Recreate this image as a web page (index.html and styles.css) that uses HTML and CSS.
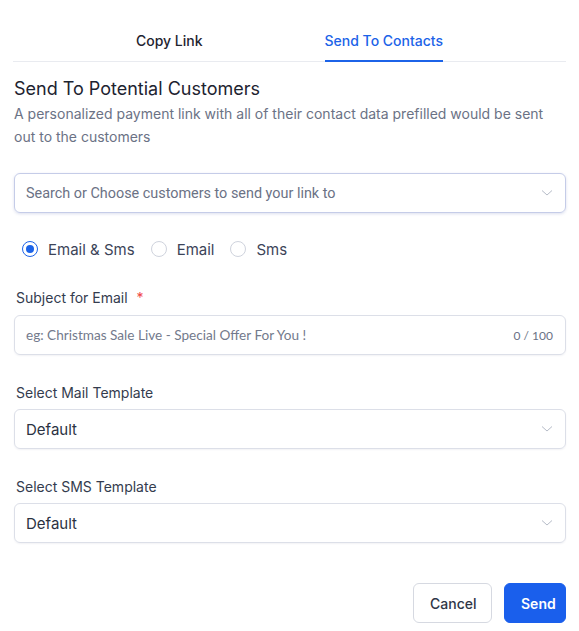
FILE: index.html
```html
<!DOCTYPE html>
<html>
<head>
<meta charset="utf-8">
<link rel="stylesheet" href="styles.css">
</head>
<body>
<div class="panel">
  <div class="tabs">
    <div class="tab">Copy Link</div>
    <div class="tab active">Send To Contacts</div>
  </div>
  <h2 class="title">Send To Potential Customers</h2>
  <p class="desc">A personalized payment link with all of their contact data prefilled would be sent out to the customers</p>

  <div class="field search">
    <span class="placeholder">Search or Choose customers to send your link to</span>
    <svg class="chev" width="12" height="8" viewBox="0 0 12 8"><path d="M1 1.5 L6 6 L11 1.5" fill="none" stroke="#b6bcc8" stroke-width="1"/></svg>
  </div>

  <div class="radios">
    <label class="radio"><span class="dot checked"></span>Email &amp; Sms</label>
    <label class="radio"><span class="dot"></span>Email</label>
    <label class="radio"><span class="dot"></span>Sms</label>
  </div>

  <div class="label first">Subject for Email <span class="req">*</span></div>
  <div class="field input">
    <span class="placeholder ph-input">eg: Christmas Sale Live - Special Offer For You !</span>
    <span class="count">0 / 100</span>
  </div>

  <div class="label second">Select Mail Template</div>
  <div class="field select">
    <span class="value">Default</span>
    <svg class="chev" width="12" height="8" viewBox="0 0 12 8"><path d="M1 1.5 L6 6 L11 1.5" fill="none" stroke="#b6bcc8" stroke-width="1"/></svg>
  </div>

  <div class="label third">Select SMS Template</div>
  <div class="field select">
    <span class="value">Default</span>
    <svg class="chev" width="12" height="8" viewBox="0 0 12 8"><path d="M1 1.5 L6 6 L11 1.5" fill="none" stroke="#b6bcc8" stroke-width="1"/></svg>
  </div>

  <div class="actions">
    <button class="btn cancel">Cancel</button>
    <button class="btn send">Send</button>
  </div>
</div>
</body>
</html>
```
FILE: styles.css
```css
* { box-sizing: border-box; }
body {
  margin: 0;
  background: #fff;
  font-family: Inter, "Noto Sans", sans-serif;
  color: #1f2937;
}
.panel {
  padding: 0 13px 0 14px;
}
.tabs {
  display: flex;
  justify-content: center;
  gap: 122px;
  border-bottom: 1px solid #e9ebf0;
  height: 62px;
  padding-top: 31px;
  margin-left: -1px;
}
.tab {
  font-size: 14px;
  font-weight: 500;
  color: #1f2430;
  height: 31px;
  line-height: 20px;
}
.tab.active {
  color: #1c63e8;
  border-bottom: 2px solid #1c63e8;
}
.title {
  margin: 15px 0 0;
  font-size: 18px;
  font-weight: 400;
  color: #1d2330;
  line-height: 24px;
}
.desc {
  margin: 1px 0 0;
  font-size: 14px;
  line-height: 23px;
  color: #6b7285;
}
.field {
  height: 40px;
  border: 1px solid #dcdfe8;
  border-radius: 6px;
  display: flex;
  align-items: center;
  padding: 0 12px 0 11px;
  box-shadow: 0 1px 2px rgba(30, 40, 80, 0.06);
}
.search {
  margin-top: 25px;
  border-color: #c5cce8;
  box-shadow: 0 1px 3px rgba(60, 80, 160, 0.18);
}
.placeholder {
  font-family: Roboto, "Noto Sans", sans-serif;
  font-size: 14.4px;
  color: #6b7285;
  flex: 1;
}
.ph-input {
  font-family: Lato, "Noto Sans", sans-serif;
  font-size: 13.6px;
  color: #737a8c;
}
.chev { margin-left: auto; }
.radios {
  display: flex;
  align-items: center;
  margin-top: 26px;
  padding-left: 8px;
  height: 20px;
}
.radio {
  display: flex;
  align-items: center;
  font-size: 15px;
  color: #3c4458;
  margin-right: 16px;
}
.dot {
  width: 16px;
  height: 16px;
  border: 1px solid #cfd3dd;
  border-radius: 50%;
  margin-right: 10px;
  position: relative;
}
.dot.checked {
  border: 1.5px solid #1c63e8;
}
.dot.checked::after {
  content: "";
  position: absolute;
  left: 2.5px;
  top: 2.5px;
  width: 8px;
  height: 8px;
  border-radius: 50%;
  background: #1c63e8;
}
.label {
  font-size: 14px;
  color: #343c4e;
  padding-left: 2px;
  line-height: 18px;
  margin-bottom: 7px;
}
.label.first { margin-top: 30px; margin-bottom: 8px; }
.label.second { margin-top: 29px; }
.label.third { margin-top: 29px; }
.req { color: #ef4444; margin-left: 5px; }
.count {
  font-family: Lato, "Noto Sans", sans-serif;
  font-size: 12px;
  color: #6b7285;
  margin-left: auto;
}
.value {
  font-size: 15px;
  color: #2b3242;
}
.actions {
  display: flex;
  justify-content: flex-end;
  gap: 12px;
  margin-top: 40px;
}
.btn {
  height: 40px;
  border-radius: 6px;
  font-family: Inter, "Noto Sans", sans-serif;
  font-size: 14px;
  font-weight: 500;
  padding: 0 16px;
  cursor: pointer;
}
.cancel {
  background: #fff;
  border: 1px solid #d6d9e1;
  color: #2f3647;
  width: 79px;
}
.send {
  background: #1a5fec;
  border: 1px solid #1a5fec;
  color: #fff;
  font-weight: 600;
  width: 62px;
}
```
